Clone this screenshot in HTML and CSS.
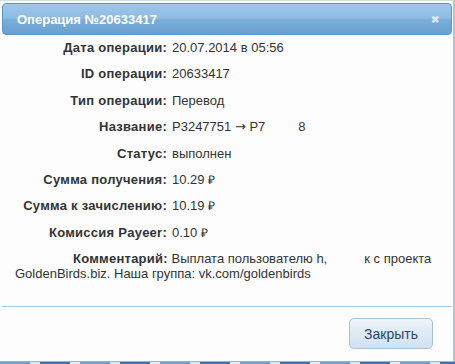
FILE: index.html
```html
<!DOCTYPE html>
<html lang="ru">
<head>
<meta charset="utf-8">
<title>Операция №20633417</title>
<link rel="stylesheet" href="styles.css">
</head>
<body>
<div class="dialog">
  <div class="titlebar">
    <span class="title">Операция №20633417</span>
    <span class="close">&#x2716;</span>
  </div>
  <div class="content">
    <div class="row"><span class="label">Дата операции:</span><span class="value">20.07.2014 в 05:56</span></div>
    <div class="row"><span class="label">ID операции:</span><span class="value">20633417</span></div>
    <div class="row"><span class="label">Тип операции:</span><span class="value">Перевод</span></div>
    <div class="row"><span class="label">Название:</span><span class="value">P3247751 <span class="arrow">→</span> P7<span class="blur">&nbsp;</span>8</span></div>
    <div class="row"><span class="label">Статус:</span><span class="value">выполнен</span></div>
    <div class="row"><span class="label">Сумма получения:</span><span class="value">10.29 <span class="rub">₽</span></span></div>
    <div class="row"><span class="label">Сумма к зачислению:</span><span class="value">10.19 <span class="rub">₽</span></span></div>
    <div class="row"><span class="label">Комиссия Payeer:</span><span class="value">0.10 <span class="rub">₽</span></span></div>
    <p class="comment"><b class="label-inline">Комментарий:</b> <span>Выплата пользователю h,</span><span class="blur2">&nbsp;</span><span>к с проекта</span><br><span>GoldenBirds.biz. Наша группа: vk.com/goldenbirds</span></p>
  </div>
  <div class="footer">
    <button class="btn" type="button">Закрыть</button>
  </div>
</div>
<div class="under"></div>
</body>
</html>
```
FILE: styles.css
```css
html, body {
  margin: 0;
  padding: 0;
  background: #ffffff;
}
body {
  font-family: "Liberation Sans", Arial, sans-serif;
  font-size: 13px;
  color: #333333;
  width: 455px;
  height: 364px;
  overflow: hidden;
}
.dialog {
  box-sizing: border-box;
  width: 455px;
  height: 362px;
  border-top: 1px solid #d3dbe3;
  border-right: 2px solid #b9c3cc;
  border-bottom: 1px solid #9fb3c6;
  background: #fdfdfe;
  padding: 2px 1px 0 2px;
  display: flex;
  flex-direction: column;
}
.titlebar {
  box-sizing: border-box;
  height: 32px;
  border: 1px solid #5d95c9;
  border-radius: 4px;
  background: linear-gradient(to bottom, #a1c8e8 0%, #8ebce3 45%, #78acd9 55%, #6a9fd2 100%);
  display: flex;
  align-items: center;
  justify-content: space-between;
  padding: 0 12px 0 14px;
}
.title {
  color: #ffffff;
  font-weight: bold;
  font-size: 13px;
}
.close {
  color: #dce9f5;
  font-size: 10px;
  font-weight: bold;
}
.content {
  padding: 0 0 0 12px;
  flex: 1;
}
.row {
  display: grid;
  grid-template-columns: 153px 1fr;
  column-gap: 5px;
  line-height: 26.4px;
}
.label {
  text-align: right;
  font-weight: bold;
  letter-spacing: 0.25px;
}
.value {
  white-space: pre;
}
.arrow {
  font-family: "DejaVu Sans", sans-serif;
  font-size: 13px;
  font-weight: normal;
}
.rub {
  font-size: 12px;
}
.blur {
  display: inline-block;
  width: 33px;
}
.blur2 {
  display: inline-block;
  width: 37px;
}
.comment {
  margin: 5px 0 0 1px;
  line-height: 15px;
  text-indent: 58px;
}
.label-inline {
  font-weight: bold;
  letter-spacing: 0.25px;
}
.footer {
  border-top: 1px solid #a9c7de;
  height: 55px;
  box-sizing: border-box;
  display: flex;
  justify-content: flex-end;
  align-items: flex-start;
  padding: 11px 19px 0 0;
}
.btn {
  font-family: "Liberation Sans", Arial, sans-serif;
  font-size: 14px;
  color: #2a4866;
  width: 84px;
  height: 31px;
  border: 1px solid #a6c2da;
  border-radius: 5px;
  background: linear-gradient(to bottom, #eef4fa 0%, #dfeaf5 50%, #d2e2f1 100%);
  padding: 0;
}
.under {
  height: 2px;
  background: repeating-linear-gradient(to right, #6f9fcf 0 30px, #d9e6f2 30px 40px, #3f74b5 40px 70px, #e8eef4 70px 80px);
}
```
